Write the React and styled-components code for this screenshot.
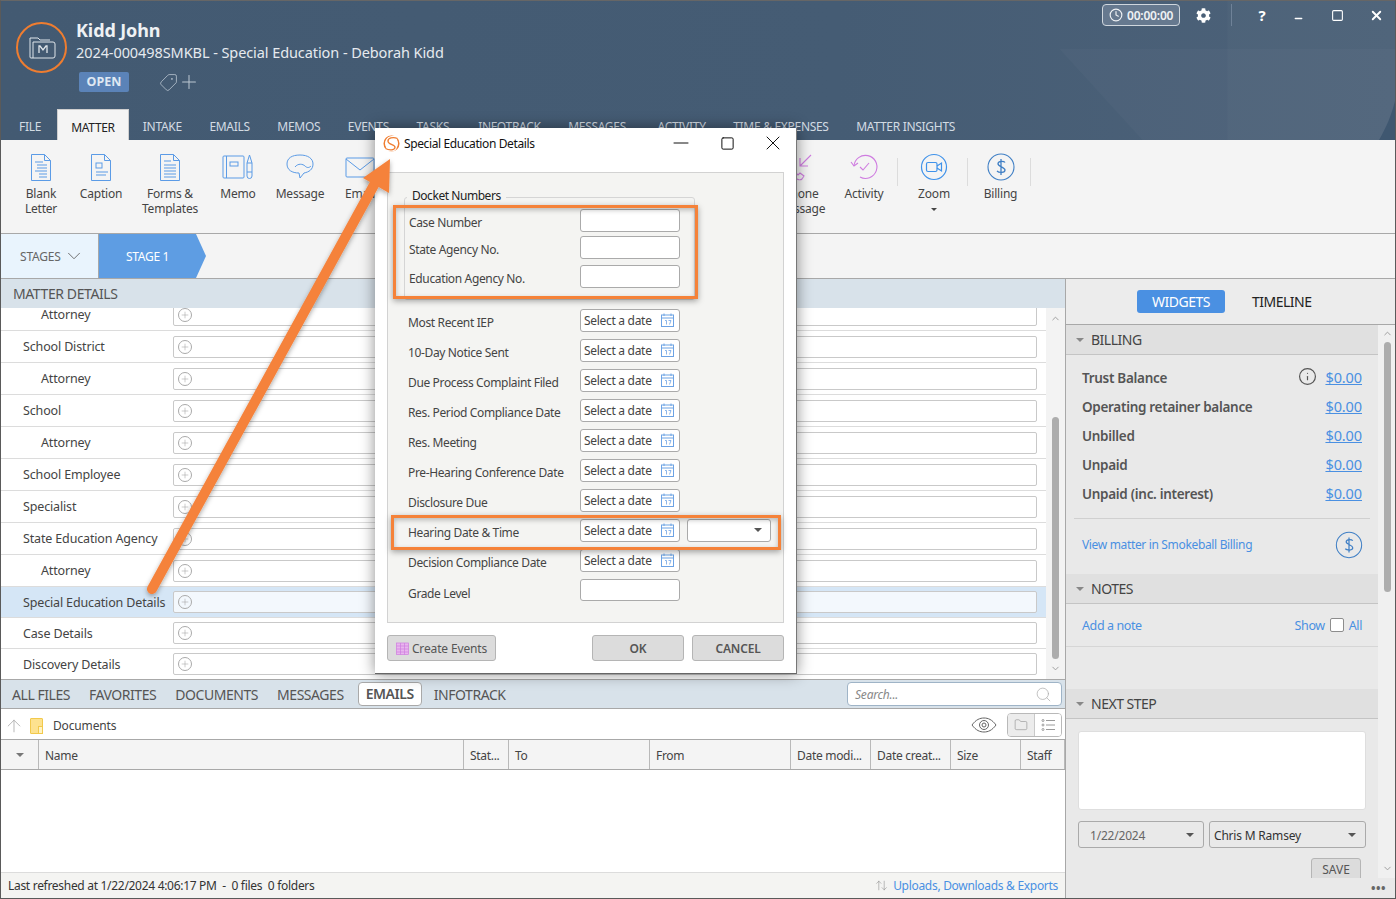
import React from "react";
import styled, { createGlobalStyle } from "styled-components";
import { ChevronDown, ChevronUp, Search, ArrowUp, Folder, Clock, Plus, Tag, Info, X, Minus, Square, ArrowUpDown } from "lucide-react";
import { FaCog } from "react-icons/fa";

const FONT = `"Noto Sans", "Open Sans", "Liberation Sans", sans-serif`;

const GlobalStyle = createGlobalStyle`
  html, body { margin: 0; padding: 0; background: #fff; }
  body { font-family: ${FONT}; font-size: 12px; color: #444; }
  * { box-sizing: border-box; }
`;

const Window = styled.div`
  position: relative;
  width: 1396px;
  height: 899px;
  overflow: hidden;
  display: flex;
  flex-direction: column;
  border: 1px solid #5a5a5a;
  border-top-color: #666;
  background: #fff;
`;

const Header = styled.header`
  position: relative;
  height: 139px;
  flex: none;
  background: linear-gradient(90deg, #435a72 0%, #455c74 60%, #4d6279 100%);
  color: #fff;
  overflow: hidden;
`;
const HeaderDeco = styled.svg`
  position: absolute;
  inset: 0;
  width: 100%;
  height: 100%;
`;
const HeaderTop = styled.div`
  position: relative;
  display: flex;
  justify-content: space-between;
  height: 108px;
  padding: 21px 0 0 15px;
`;
const HeaderLeft = styled.div`
  display: flex;
`;
const MatterBadge = styled.div`
  width: 51px;
  height: 51px;
  border: 2px solid #ef7d30;
  border-radius: 50%;
  display: flex;
  align-items: center;
  justify-content: center;
  flex: none;
`;
const MatterInfo = styled.div`
  margin-left: 9px;
  margin-top: -3px;
`;
const MatterName = styled.div`
  font-size: 18px;
  font-weight: 700;
  line-height: 22px;
  color: #eef1f4;
  letter-spacing: -0.1px;
`;
const MatterTitle = styled.div`
  font-size: 14.5px;
  line-height: 22px;
  color: #e6eaef;
  letter-spacing: -0.08px;
`;
const StatusRow = styled.div`
  display: flex;
  align-items: center;
  margin-top: 8px;
  padding-left: 3px;
  gap: 30px;
`;
const OpenPill = styled.span`
  width: 50px;
  height: 20px;
  background: #5b83b8;
  border-radius: 2px;
  color: #dfe8f2;
  font-size: 12.5px;
  font-weight: 700;
  line-height: 20px;
  text-align: center;
`;
const TagIcons = styled.span`
  display: flex;
  align-items: center;
  color: #bcc7d2;
`;
const WindowControls = styled.div`
  display: flex;
  align-items: flex-start;
  color: #fff;
  padding: 3px 0 0 0;
  margin-top: -21px;
`;
const TimerPill = styled.div`
  display: flex;
  align-items: center;
  gap: 4px;
  width: 78px;
  height: 22px;
  padding-left: 6px;
  border: 1px solid #cfd6dd;
  border-radius: 4px;
  background: #66798f;
  font-size: 12px;
  font-weight: 600;
  color: #eef1f4;
  letter-spacing: -0.2px;
`;
const CtrlSlot = styled.div`
  width: ${(p) => p.$w}px;
  margin-left: ${(p) => p.$ml || 0}px;
  height: 22px;
  display: flex;
  align-items: center;
  justify-content: center;
  font-weight: 700;
  font-size: 15px;
  border-right: ${(p) => (p.$sep ? "1px solid #6f8298" : "none")};
`;
const TabBar = styled.nav`
  position: relative;
  display: flex;
  height: 31px;
  padding-left: 18px;
  font-size: 12px;
`;
const Tab = styled.div`
  height: 31px;
  line-height: 36px;
  padding: 0 ${(p) => (p.$active ? 13 : 0)}px;
  margin-right: ${(p) => (p.$active ? 14 : 27.6 + (p.$extra || 0))}px;
  margin-left: ${(p) => (p.$active ? -11.5 : 0)}px;
  color: ${(p) => (p.$active ? "#222" : "#d3dbe3")};
  background: ${(p) => (p.$active ? "#f4f4f4" : "transparent")};
  border: ${(p) => (p.$active ? "1px solid #cfcfcf" : "none")};
  border-bottom: none;
  letter-spacing: -0.3px;
  white-space: nowrap;
`;

const Ribbon = styled.section`
  display: flex;
  height: 94px;
  flex: none;
  background: #f4f4f4;
  border-bottom: 1px solid #a8a8a8;
  padding-top: 11px;
`;
const RibbonBtn = styled.div`
  flex: none;
  width: ${(p) => p.$w}px;
  margin-left: ${(p) => p.$ml || 0}px;
  padding-left: ${(p) => p.$pl || 0}px;
  display: flex;
  flex-direction: column;
  align-items: center;
  text-align: center;
  font-size: 12px;
  line-height: 15px;
  color: #444;
  letter-spacing: -0.2px;
  span { display: block; white-space: nowrap; }
`;
const RibbonSep = styled.div`
  flex: none;
  width: 1px;
  height: 28px;
  margin-top: 7px;
  background: #dcdcdc;
`;
const RibbonIcon = styled.svg`
  width: 32px;
  height: 32px;
  margin-bottom: 3px;
  flex: none;
`;
const Caret = styled.i`
  display: block;
  width: 0;
  height: 0;
  margin: 7px auto 0;
  border: 3px solid transparent;
  border-top: 3px solid #444;
  border-bottom: none;
`;

const StageBar = styled.div`
  height: 44px;
  flex: none;
  display: flex;
  background: #f4f4f4;
`;
const StagesBtn = styled.div`
  width: 98px;
  background: #e9f4fd;
  border-right: 1px solid #a8a8a8;
  display: flex;
  align-items: center;
  padding-left: 19px;
  gap: 2px;
  color: #666;
  font-size: 12px;
  letter-spacing: -0.2px;
`;
const StageChip = styled.div`
  width: 107px;
  background: #5e9de3;
  clip-path: polygon(0 0, 97px 0, 100% 50%, 97px 100%, 0 100%);
  color: #fff;
  display: flex;
  align-items: center;
  padding-left: 27px;
  font-size: 12px;
  letter-spacing: -0.3px;
`;
const Main = styled.div`
  flex: 1;
  display: flex;
  min-height: 0;
`;
const LeftCol = styled.div`
  width: 1065px;
  flex: none;
  display: flex;
  flex-direction: column;
  border-right: 1px solid #a8a8a8;
`;
const SectionBar = styled.div`
  height: 30px;
  flex: none;
  background: #d8e2ea;
  border-top: 1px solid #a8a8a8;
  display: flex;
  align-items: center;
  padding-left: 12px;
  font-size: 14px;
  color: #555;
  letter-spacing: -0.4px;
`;
const DetailsArea = styled.div`
  position: relative;
  height: 371px;
  flex: none;
  display: flex;
  overflow: hidden;
`;
const RowList = styled.div`
  flex: 1;
  min-width: 0;
`;
const Row = styled.div`
  display: grid;
  grid-template-columns: 172px 864px;
  align-items: center;
  height: ${(p) => p.$h}px;
  border-bottom: 1px solid #dcdcdc;
  background: ${(p) => (p.$sel ? "#d5e6f6" : "transparent")};
  overflow: hidden;
`;
const RowLabel = styled.div`
  padding-left: ${(p) => (p.$sub ? 40 : 22)}px;
  margin-top: ${(p) => p.$mt || 0}px;
  font-size: 12.5px;
  line-height: ${(p) => (p.$mt < 0 ? 13 : 14)}px;
  color: #444;
  white-space: nowrap;
  letter-spacing: -0.15px;
`;
const RowInput = styled.div`
  height: 22px;
  margin-top: ${(p) => (p.$clip ? -9 : 0)}px;
  background: ${(p) => (p.$sel ? "#f3f8fd" : "#fff")};
  border: 1px solid #c9c9c9;
  border-radius: 2px;
  display: flex;
  align-items: center;
  padding-left: 4px;
`;
const PlusDot = styled.span`
  width: 14px;
  height: 14px;
  border: 1px solid #aaa;
  border-radius: 50%;
  display: flex;
  align-items: center;
  justify-content: center;
  color: #999;
`;
const Scroll = styled.div`
  width: 19px;
  flex: none;
  background: #f3f3f3;
  display: flex;
  flex-direction: column;
  align-items: center;
  color: #999;
`;
const ScrollThumb = styled.div`
  width: 7px;
  height: ${(p) => p.$h}px;
  margin-top: ${(p) => p.$mt}px;
  background: #adadad;
  border-radius: 4px;
  flex: none;
`;
const FileTabs = styled.div`
  height: 30px;
  flex: none;
  display: flex;
  align-items: center;
  background: #d8e2ea;
  border-top: 1px solid #a8a8a8;
  border-bottom: 1px solid #a8a8a8;
  padding: 0 3px 0 11px;
  font-size: 14px;
  color: #555;
  letter-spacing: -0.45px;
`;
const FileTab = styled.span`
  margin-right: ${(p) => (p.$active ? 12 : 19)}px;
  margin-left: ${(p) => (p.$active ? -5 : 0)}px;
  ${(p) =>
    p.$active &&
    `height: 24px;
     line-height: 22px;
     padding: 0 7px;
     background: #fff;
     border: 1px solid #a9a9a9;
     border-radius: 4px;
     font-weight: 600;`}
`;
const SearchBox = styled.div`
  margin-left: auto;
  width: 215px;
  height: 24px;
  background: #fff;
  border: 1px solid #9fb4c7;
  border-radius: 4px;
  padding: 0 9px 0 7px;
  display: flex;
  align-items: center;
  justify-content: space-between;
  font-style: italic;
  font-size: 12px;
  color: #888;
  letter-spacing: -0.2px;
`;
const PathRow = styled.div`
  height: 31px;
  flex: none;
  display: flex;
  align-items: center;
  padding: 3px 3px 0 3px;
  font-size: 12px;
  color: #444;
  letter-spacing: -0.15px;
  border-bottom: 1px solid #a8a8a8;
`;
const FolderTab = styled.span`
  position: relative;
  width: 13px;
  height: 16px;
  margin: 0 10px 0 6px;
  background: #fde28f;
  border: 1px solid #f2c94c;
  border-radius: 1px;
  &::after {
    content: "";
    position: absolute;
    right: -1px;
    bottom: -1px;
    width: 3px;
    height: 6px;
    border: 1px solid #f2c94c;
    background: #fff3c4;
  }
`;
const EyeIcon = styled.svg`
  margin-left: auto;
  margin-top: -2px;
  flex: none;
`;
const ViewToggle = styled.div`
  display: flex;
  width: 55px;
  height: 24px;
  margin-top: -2px;
  margin-left: 10px;
  border: 1px solid #b9b9b9;
  border-radius: 4px;
  overflow: hidden;
`;
const ViewBtn = styled.span`
  flex: 1;
  display: flex;
  align-items: center;
  justify-content: center;
  background: ${(p) => (p.$on ? "#ececec" : "#fff")};
  border-right: ${(p) => (p.$on ? "1px solid #c9c9c9" : "none")};
  color: #8b8b8b;
`;
const TableHead = styled.div`
  height: 30px;
  flex: none;
  display: grid;
  grid-template-columns: 38px 425px 45px 141px 141px 80px 80px 70px 44px;
  background: #f4f4f4;
  border-bottom: 1px solid #a8a8a8;
  font-size: 12px;
  color: #444;
  letter-spacing: -0.3px;
`;
const HeadCell = styled.div`
  display: flex;
  align-items: center;
  justify-content: ${(p) => (p.$center ? "center" : "flex-start")};
  padding: 1px ${(p) => (p.$center ? 0 : 6)}px 0;
  border-right: 1px solid #b9b9b9;
  white-space: nowrap;
  overflow: hidden;
`;
const DownTri = styled.i`
  width: 0;
  height: 0;
  border: ${(p) => p.$s || 4}px solid transparent;
  border-top: ${(p) => p.$s || 4}px solid ${(p) => p.$c || "#777"};
  border-bottom: none;
  flex: none;
`;
const TableBody = styled.div`
  flex: 1;
  background: #fff;
`;
const StatusBar = styled.footer`
  height: 26px;
  flex: none;
  display: flex;
  align-items: center;
  justify-content: space-between;
  padding: 0 7px;
  background: #f4f4f2;
  border-top: 1px solid #dcdcdc;
  font-size: 12px;
  color: #333;
  letter-spacing: -0.3px;
  white-space: pre;
`;
const UploadLink = styled.span`
  display: flex;
  align-items: center;
  gap: 5px;
  color: #4a90e2;
`;

const RightCol = styled.aside`
  flex: 1;
  min-width: 0;
  display: flex;
  flex-direction: column;
  background: #e9e9e9;
`;
const WidgetTabs = styled.div`
  height: 47px;
  flex: none;
  display: flex;
  align-items: center;
  padding-left: 71px;
  border-top: 1px solid #a8a8a8;
  border-bottom: 1px solid #a8a8a8;
  background: #ececec;
  font-size: 14px;
  letter-spacing: -0.5px;
`;
const WidgetTab = styled.span`
  width: 88px;
  height: 23px;
  margin-right: 27px;
  line-height: 23px;
  text-align: ${(p) => (p.$on ? "center" : "left")};
  border-radius: 3px;
  color: ${(p) => (p.$on ? "#fff" : "#222")};
  background: ${(p) => (p.$on ? "#4a90e2" : "transparent")};
`;
const SideBody = styled.div`
  flex: 1;
  min-height: 0;
  display: flex;
`;
const SideContent = styled.div`
  width: 312px;
  flex: none;
  overflow: hidden;
`;
const WidgetHead = styled.div`
  height: 30px;
  display: flex;
  align-items: center;
  gap: 7px;
  padding-left: 10px;
  background: #e0e0e0;
  border-bottom: 1px solid #c4c4c4;
  font-size: 14px;
  color: #444;
  letter-spacing: -0.5px;
`;
const BalanceList = styled.div`
  padding: 8px 16px 10px;
`;
const BalanceRow = styled.div`
  height: 29px;
  display: flex;
  align-items: center;
  justify-content: space-between;
  font-size: 13.5px;
  font-weight: 600;
  color: #555;
  letter-spacing: -0.3px;
`;
const Amount = styled.span`
  display: flex;
  align-items: center;
  gap: 8px;
  margin-top: -2px;
  color: #4a90e2;
  font-size: 14.5px;
  font-weight: 400;
  text-decoration: underline;
  letter-spacing: -0.1px;
`;
const BillingFoot = styled.div`
  height: 56px;
  margin: 0 8px;
  padding: 0 6px 4px 8px;
  border-top: 1px solid #d0d0d0;
  display: flex;
  align-items: center;
  justify-content: space-between;
  color: #4a90e2;
  font-size: 12px;
  letter-spacing: -0.34px;
`;
const NotesRow = styled.div`
  height: 43px;
  padding: 0 16px;
  border-bottom: 1px solid #d6d6d6;
  display: flex;
  align-items: center;
  justify-content: space-between;
  color: #4a90e2;
  font-size: 12.5px;
  letter-spacing: -0.4px;
`;
const ShowAll = styled.span`
  display: flex;
  align-items: center;
  gap: 5px;
`;
const Check = styled.i`
  width: 14px;
  height: 14px;
  background: #fff;
  border: 1px solid #8d8d8d;
  border-radius: 2px;
`;
const NotesGap = styled.div`
  height: 42px;
`;
const NextStep = styled.div`
  padding: 12px 12px 0;
  display: flex;
  flex-direction: column;
  height: 180px;
`;
const NextText = styled.div`
  height: 79px;
  background: #fff;
  border: 1px solid #dedede;
  border-radius: 3px;
`;
const SelectRow = styled.div`
  display: flex;
  gap: 5px;
  margin-top: 11px;
`;
const SideSelect = styled.div`
  width: ${(p) => p.$w}px;
  height: 27px;
  border: 1px solid #aaa;
  border-radius: 3px;
  display: flex;
  align-items: center;
  justify-content: space-between;
  padding: 1px 9px 0 ${(p) => p.$pl}px;
  font-size: 12px;
  color: ${(p) => p.$c};
  letter-spacing: -0.2px;
`;
const SaveBtn = styled.div`
  align-self: flex-end;
  width: 50px;
  height: 26px;
  margin: 10px 5px 0 0;
  background: #dcdcdc;
  border: 1px solid #b5b5b5;
  border-radius: 3px;
  text-align: center;
  line-height: 22px;
  font-size: 12px;
  color: #555;
`;
const SideScroll = styled(Scroll)`
  width: 18px;
  background: #f0f0f0;
`;
const DotsStrip = styled.div`
  height: 20px;
  flex: none;
  display: flex;
  align-items: center;
  justify-content: flex-end;
  padding-right: 9px;
  font-size: 12px;
  font-weight: 700;
  color: #666;
  letter-spacing: 0.5px;
`;

const Dialog = styled.div`
  position: absolute;
  left: 374px;
  top: 127px;
  width: 422px;
  height: 546px;
  background: #fff;
  box-shadow: 0 0 14px rgba(0, 0, 0, 0.45);
  border-bottom: 1px solid #666;
  border-right: 1px solid #777;
  display: flex;
  flex-direction: column;
  padding: 0 12px;
`;
const DialogTitle = styled.div`
  height: 32px;
  flex: none;
  display: flex;
  align-items: center;
  margin: 0 -12px 0 -4px;
  padding-bottom: 2px;
  font-size: 12px;
  color: #111;
  letter-spacing: -0.39px;
`;
const DialogTitleText = styled.span`
  margin-left: 4px;
  flex: 1;
`;
const TitleBtn = styled.span`
  flex: none;
  width: 46px;
  height: 30px;
  display: flex;
  align-items: center;
  justify-content: center;
  color: #111;
`;
const DialogPanel = styled.div`
  flex: none;
  margin-top: 12px;
  height: 451px;
  background: #f4f4f2;
  border: 1px solid #d2d2d2;
  padding-top: 24px;
`;
const Fieldset = styled.div`
  position: relative;
  width: 291px;
  height: 103px;
  margin: 0 0 7px 16px;
  border: 1px solid #d5d5d5;
  border-radius: 3px;
  padding: 9px 0 0 4px;
`;
const Legend = styled.div`
  position: absolute;
  left: 2px;
  top: -10px;
  padding: 0 5px;
  background: #f4f4f2;
  color: #222;
  font-size: 12px;
  line-height: 16px;
  letter-spacing: -0.45px;
`;
const FormRow = styled.div`
  display: flex;
  align-items: center;
  height: ${(p) => p.$h || 30}px;
  padding-left: ${(p) => p.$pl || 0}px;
`;
const FormLabel = styled.div`
  width: ${(p) => p.$w || 172}px;
  flex: none;
  font-size: 12px;
  color: #444;
  letter-spacing: -0.36px;
  white-space: nowrap;
  margin-top: ${(p) => p.$mt || 0}px;
`;
const FormInput = styled.div`
  width: 100px;
  height: ${(p) => p.$h || 23}px;
  margin-top: ${(p) => p.$mt || 0}px;
  background: #fff;
  border: 1px solid #aaa;
  border-radius: 3px;
  flex: none;
`;
const DateInput = styled(FormInput)`
  display: flex;
  align-items: center;
  justify-content: space-between;
  padding: 0 4px 0 3px;
  font-size: 12px;
  color: #444;
  letter-spacing: -0.3px;
  margin-top: -4px;
`;
const TimeSelect = styled(FormInput)`
  width: 84px;
  margin-left: 7px;
  margin-top: -4px;
  display: flex;
  align-items: center;
  justify-content: flex-end;
  padding-right: 8px;
`;
const DialogActions = styled.div`
  display: flex;
  align-items: center;
  margin-top: 12px;
`;
const DlgBtn = styled.div`
  width: ${(p) => p.$w}px;
  height: 26px;
  margin-left: ${(p) => p.$ml || 0}px;
  background: #dcdcdc;
  border: 1px solid #b5b5b5;
  border-radius: 3px;
  display: flex;
  align-items: center;
  justify-content: center;
  gap: 3px;
  font-size: 12px;
  font-weight: ${(p) => (p.$bold ? 600 : 400)};
  color: #555;
  letter-spacing: -0.15px;
`;
const Callout = styled.div`
  position: absolute;
  left: ${(p) => p.$x}px;
  top: ${(p) => p.$y}px;
  width: ${(p) => p.$w}px;
  height: ${(p) => p.$h}px;
  border: 3px solid #f58239;
  box-shadow: 0 2px 6px rgba(0, 0, 0, 0.35), inset 0 2px 5px rgba(0, 0, 0, 0.25);
  pointer-events: none;
`;
const ArrowLayer = styled.svg`
  position: absolute;
  left: 0;
  top: 0;
  width: 1396px;
  height: 899px;
  pointer-events: none;
`;

const blue = "#5b9be6";
const lilac = "#cf7ce0";

const DocIcon = ({ kind }) => (
  <RibbonIcon viewBox="0 0 32 32" fill="none" stroke={blue} strokeWidth="1">
    <path d="M6.5 3.5h13l6 6v20h-19z" />
    <path d="M19.5 3.5v6h6" />
    {kind === "letter" && <path d="M10 11h8M12 14h10M12 17h10M10 20h12M14 23h8M14 26h8" />}
    {kind === "caption" && (
      <>
        <rect x="11" y="12" width="6" height="5" />
        <path d="M11 21h12M11 24h10" />
      </>
    )}
    {kind === "forms" && <path d="M10 10h7M10 14h12M10 17h12M10 20h12M10 23h12M10 26h12" />}
  </RibbonIcon>
);
const MemoIcon = () => (
  <RibbonIcon viewBox="0 0 32 32" fill="none" stroke={blue} strokeWidth="1">
    <rect x="1" y="5" width="21" height="22" rx="1" />
    <path d="M4.5 5v22" />
    <rect x="8" y="11" width="8" height="4" />
    <path d="M25 12v13a2.5 2.5 0 0 0 5 0V12zM25 12l2.500-8 2.500 8M25 21h5" />
  </RibbonIcon>
);
const MessageIcon = () => (
  <RibbonIcon viewBox="0 0 32 32" fill="none" stroke={blue} strokeWidth="1">
    <path d="M16 4c8 0 13 3.500 13 9s-4 8-9 9l-4 5-1-5C8 22 3 19 3 13S8 4 16 4z" />
    <path d="M11 16c3-4 8-3 10-1s4 2 6 0" />
  </RibbonIcon>
);
const MailIcon = () => (
  <RibbonIcon viewBox="0 0 32 32" fill="none" stroke={blue} strokeWidth="1">
    <rect x="2" y="7" width="28" height="19" rx="1" />
    <path d="M2 8l14 11L30 8" />
  </RibbonIcon>
);
const PhoneMsgIcon = () => (
  <RibbonIcon viewBox="0 0 32 32" fill="none" stroke={lilac} strokeWidth="1.100">
    <path d="M26 4L15 15M15 7v8h8" />
    <path d="M5 16c-2 2 0 6 3 9s7 5 9 3l2-3-4-3-2 2-4-4 2-2-3-4z" />
  </RibbonIcon>
);
const ActivityIcon = () => (
  <RibbonIcon viewBox="0 0 32 32" fill="none" stroke={lilac} strokeWidth="1.100">
    <path d="M6 15A11.500 11.500 0 1 1 12 26" />
    <path d="M3 11l3 4 4-3" />
    <path d="M12 16l3 3 6-7" />
  </RibbonIcon>
);
const ZoomIcon = () => (
  <RibbonIcon viewBox="0 0 32 32" fill="none" stroke="#3f92ea" strokeWidth="1.200">
    <circle cx="16" cy="16" r="12.500" />
    <rect x="8.500" y="11.500" width="10.500" height="9" rx="1.500" />
    <path d="M19 15l4.500-3v8L19 17" />
  </RibbonIcon>
);
const BillingIcon = () => (
  <RibbonIcon viewBox="0 0 32 32" fill="none" stroke="#3f7fc5" strokeWidth="1.100">
    <circle cx="16" cy="16" r="13" />
    <path d="M20 11.500c-1-1.500-6.500-2-7 1s7 3.500 7 6.500-6 3-8 1M16 8v16" strokeWidth="1.300" />
  </RibbonIcon>
);
const DollarCircle = () => (
  <svg width="30" height="30" viewBox="0 0 32 32" fill="none" stroke="#3f7fc5" strokeWidth="1.100">
    <circle cx="16" cy="16" r="13.500" />
    <path d="M20 11.500c-1-1.500-6.500-2-7 1s7 3.500 7 6.500-6 3-8 1M16 8v16" strokeWidth="1.300" />
  </svg>
);
const CalIcon = () => (
  <svg width="15" height="16" viewBox="0 0 15 16" fill="none" stroke="#6da3e4" strokeWidth="1">
    <rect x="1.500" y="3" width="12" height="11.500" />
    <path d="M1.500 6h12M4 1.500v2.500M11 1.500v2.500" />
    <path d="M5 8.500h1.500v4M8.500 8.500h2.500l-1.500 4" strokeWidth="0.800" />
  </svg>
);
const MatterFolder = () => (
  <svg width="28" height="26" viewBox="0 0 28 26" fill="none" stroke="#dfe5ea" strokeWidth="1">
    <path d="M2 3h8l2 2h10" />
    <path d="M2 3v19a1 1 0 0 0 1 1h2" />
    <path d="M5 23V7h20a2 2 0 0 1 2 2v12a2 2 0 0 1-2 2z" />
    <path d="M11 18v-7h1l3 4 3-4h1v7" strokeWidth="1.300" />
  </svg>
);
const SmokeballLogo = () => (
  <svg width="17" height="17" viewBox="0 0 17 17" fill="none">
    <circle cx="8.500" cy="8.500" r="7.300" stroke="#ef7d30" strokeWidth="1.500" />
    <path d="M14.500 3.500C10 1.500 4.500 3 5 6.500S12.500 9.500 12 12.500 6 15.500 2.500 13.500" stroke="#fff" strokeWidth="3.400" />
    <path d="M14.500 3.500C10 1.500 4.500 3 5 6.500S12.500 9.500 12 12.500 6 15.500 2.500 13.500" stroke="#ef7d30" strokeWidth="1.300" />
  </svg>
);
const ListViewIcon = () => (
  <svg width="14" height="14" viewBox="0 0 14 14" fill="none" stroke="#9a9a9a" strokeWidth="1">
    <path d="M5 2.500h9M5 7h9M5 11.500h9" />
    <circle cx="2" cy="2.500" r="1" />
    <circle cx="2" cy="7" r="1" />
    <circle cx="2" cy="11.500" r="1" />
  </svg>
);
const CalPurple = () => (
  <svg width="13" height="13" viewBox="0 0 13 13" fill="#e9b6ee" stroke="#cf7ce0" strokeWidth="0.700">
    <rect x="0.500" y="1" width="12" height="11.500" />
    <path d="M0.500 4h12M0.500 7h12M0.500 10h12M4.500 1v11.500M8.500 1v11.500" />
  </svg>
);

const tabs = [
  { t: "INTAKE" },
  { t: "EMAILS" },
  { t: "MEMOS" },
  { t: "EVENTS" },
  { t: "TASKS", extra: 1.5 },
  { t: "INFOTRACK" },
  { t: "MESSAGES", extra: 4 },
  { t: "ACTIVITY" },
  { t: "TIME & EXPENSES" },
  { t: "MATTER INSIGHTS" },
];
const rows = [
  { label: "Attorney", sub: true, h: 23, clip: true },
  { label: "School District", h: 32 },
  { label: "Attorney", sub: true, h: 32 },
  { label: "School", h: 32 },
  { label: "Attorney", sub: true, h: 32 },
  { label: "School Employee", h: 32 },
  { label: "Specialist", h: 32 },
  { label: "State Education Agency", h: 32 },
  { label: "Attorney", sub: true, h: 32 },
  { label: "Special Education Details", h: 31, sel: true, low: true },
  { label: "Case Details", h: 31, low: true },
  { label: "Discovery Details", h: 31, low: true },
];
const balances = ["Trust Balance", "Operating retainer balance", "Unbilled", "Unpaid", "Unpaid (inc. interest)"];
const dates = ["Most Recent IEP", "10-Day Notice Sent", "Due Process Complaint Filed", "Res. Period Compliance Date", "Res. Meeting", "Pre-Hearing Conference Date", "Disclosure Due"];

export default function App() {
  return (
    <>
      <GlobalStyle />
      <Window>
        <Header>
          <HeaderDeco viewBox="0 0 1396 139" preserveAspectRatio="none">
            <path d="M1060 48H1396V139H1143z" fill="#ffffff" opacity="0.025" />
            <path d="M1228 0h168v139h-168z" fill="#ffffff" opacity="0.02" />
            <path d="M1380 139C1388 125 1392 115 1396 100V139z" fill="#3f5770" />
          </HeaderDeco>
          <HeaderTop>
            <HeaderLeft>
              <MatterBadge><MatterFolder /></MatterBadge>
              <MatterInfo>
                <MatterName>Kidd John</MatterName>
                <MatterTitle>2024-000498SMKBL - Special Education - Deborah Kidd</MatterTitle>
                <StatusRow>
                  <OpenPill>OPEN</OpenPill>
                  <TagIcons>
                    <Tag size={19} strokeWidth={1} style={{ transform: "scaleX(-1)" }} />
                    <Plus size={22} strokeWidth={1.1} />
                  </TagIcons>
                </StatusRow>
              </MatterInfo>
            </HeaderLeft>
            <WindowControls>
              <TimerPill><Clock size={14} />00:00:00</TimerPill>
              <CtrlSlot $w={46}><FaCog size={15} /></CtrlSlot>
              <CtrlSlot $w={6} $sep />
              <CtrlSlot $w={36} $ml={12}>?</CtrlSlot>
              <CtrlSlot $w={37}><Minus size={11} strokeWidth={3} style={{ marginTop: 7 }} /></CtrlSlot>
              <CtrlSlot $w={40}><Square size={13} strokeWidth={2} /></CtrlSlot>
              <CtrlSlot $w={38}><X size={15} strokeWidth={3} /></CtrlSlot>
            </WindowControls>
          </HeaderTop>
          <TabBar>
            <Tab>FILE</Tab>
            <Tab $active>MATTER</Tab>
            {tabs.map((x) => <Tab key={x.t} $extra={x.extra}>{x.t}</Tab>)}
          </TabBar>
        </Header>

        <Ribbon>
          <RibbonBtn $w={60} $ml={10}><DocIcon kind="letter" /><span>Blank</span><span>Letter</span></RibbonBtn>
          <RibbonBtn $w={60}><DocIcon kind="caption" /><span>Caption</span></RibbonBtn>
          <RibbonBtn $w={78}><DocIcon kind="forms" /><span>Forms &amp;</span><span>Templates</span></RibbonBtn>
          <RibbonBtn $w={58}><MemoIcon /><span>Memo</span></RibbonBtn>
          <RibbonBtn $w={66}><MessageIcon /><span>Message</span></RibbonBtn>
          <RibbonBtn $w={54}><MailIcon /><span>Email</span></RibbonBtn>
          <RibbonBtn $w={60} $ml={384}><PhoneMsgIcon /><span>Phone</span><span>Message</span></RibbonBtn>
          <RibbonBtn $w={66}><ActivityIcon /><span>Activity</span></RibbonBtn>
          <RibbonSep />
          <RibbonBtn $w={69} $pl={3}><ZoomIcon /><span>Zoom</span><Caret /></RibbonBtn>
          <RibbonSep />
          <RibbonBtn $w={62} $pl={3}><BillingIcon /><span>Billing</span></RibbonBtn>
          <RibbonSep />
        </Ribbon>

        <StageBar>
          <StagesBtn>STAGES<ChevronDown size={22} strokeWidth={1} /></StagesBtn>
          <StageChip>STAGE 1</StageChip>
        </StageBar>

        <Main>
          <LeftCol>
            <SectionBar>MATTER DETAILS</SectionBar>
            <DetailsArea>
              <RowList>
                {rows.map((r, i) => (
                  <Row key={i} $h={r.h} $sel={r.sel}>
                    <RowLabel $sub={r.sub} $mt={r.clip ? -9 : r.low ? 2 : 0}>{r.label}</RowLabel>
                    <RowInput $clip={r.clip} $sel={r.sel}>
                      <PlusDot><Plus size={10} strokeWidth={1.2} /></PlusDot>
                    </RowInput>
                  </Row>
                ))}
              </RowList>
              <Scroll>
                <ChevronUp size={11} style={{ marginTop: 5 }} />
                <ScrollThumb $h={242} $mt={93} />
                <ChevronDown size={11} style={{ marginTop: 4 }} />
              </Scroll>
            </DetailsArea>
            <FileTabs>
              <FileTab>ALL FILES</FileTab>
              <FileTab>FAVORITES</FileTab>
              <FileTab>DOCUMENTS</FileTab>
              <FileTab>MESSAGES</FileTab>
              <FileTab $active>EMAILS</FileTab>
              <FileTab>INFOTRACK</FileTab>
              <SearchBox>Search...<Search size={17} strokeWidth={1} color="#aaa" /></SearchBox>
            </FileTabs>
            <PathRow>
              <ArrowUp size={20} strokeWidth={1} color="#aaa" />
              <FolderTab />
              Documents
              <EyeIcon width="26" height="16" viewBox="0 0 26 16" fill="none" stroke="#666" strokeWidth="1">
                <path d="M1 8C5 2.500 9 1 13 1s8 1.500 12 7c-4 5.500-8 7-12 7S5 13.500 1 8z" />
                <circle cx="13" cy="8" r="4.500" />
                <circle cx="13" cy="8" r="2" />
              </EyeIcon>
              <ViewToggle>
                <ViewBtn $on><Folder size={14} strokeWidth={1} /></ViewBtn>
                <ViewBtn><ListViewIcon /></ViewBtn>
              </ViewToggle>
            </PathRow>
            <TableHead>
              <HeadCell $center><DownTri /></HeadCell>
              <HeadCell>Name</HeadCell>
              <HeadCell>Stat...</HeadCell>
              <HeadCell>To</HeadCell>
              <HeadCell>From</HeadCell>
              <HeadCell>Date modi...</HeadCell>
              <HeadCell>Date creat...</HeadCell>
              <HeadCell>Size</HeadCell>
              <HeadCell>Staff</HeadCell>
            </TableHead>
            <TableBody />
            <StatusBar>
              <span>Last refreshed at 1/22/2024 4:06:17 PM  -  0 files  0 folders</span>
              <UploadLink><ArrowUpDown size={13} strokeWidth={1} color="#888" />Uploads, Downloads &amp; Exports</UploadLink>
            </StatusBar>
          </LeftCol>

          <RightCol>
            <WidgetTabs>
              <WidgetTab $on>WIDGETS</WidgetTab>
              <WidgetTab>TIMELINE</WidgetTab>
            </WidgetTabs>
            <SideBody>
              <SideContent>
                <WidgetHead><DownTri $c="#888" />BILLING</WidgetHead>
                <BalanceList>
                  {balances.map((b, i) => (
                    <BalanceRow key={b}>
                      {b}
                      <Amount>
                        {i === 0 && <Info size={19} color="#555" strokeWidth={1.5} />}
                        $0.00
                      </Amount>
                    </BalanceRow>
                  ))}
                </BalanceList>
                <BillingFoot>View matter in Smokeball Billing<DollarCircle /></BillingFoot>
                <WidgetHead><DownTri $c="#888" />NOTES</WidgetHead>
                <NotesRow>
                  Add a note
                  <ShowAll>Show<Check />All</ShowAll>
                </NotesRow>
                <NotesGap />
                <WidgetHead><DownTri $c="#888" />NEXT STEP</WidgetHead>
                <NextStep>
                  <NextText />
                  <SelectRow>
                    <SideSelect $w={126} $pl={11} $c="#666">1/22/2024<DownTri $c="#555" /></SideSelect>
                    <SideSelect $w={157} $pl={4} $c="#333">Chris M Ramsey<DownTri $c="#555" /></SideSelect>
                  </SelectRow>
                  <SaveBtn>SAVE</SaveBtn>
                </NextStep>
              </SideContent>
              <SideScroll>
                <ChevronUp size={11} style={{ marginTop: 3 }} />
                <ScrollThumb $h={250} $mt={3} />
                <ChevronDown size={11} style={{ marginTop: "auto", marginBottom: 4 }} />
              </SideScroll>
            </SideBody>
            <DotsStrip>•••</DotsStrip>
          </RightCol>
        </Main>

        <Dialog>
          <DialogTitle>
            <SmokeballLogo />
            <DialogTitleText>Special Education Details</DialogTitleText>
            <TitleBtn><Minus size={24} strokeWidth={1} /></TitleBtn>
            <TitleBtn><Square size={15} strokeWidth={1.6} /></TitleBtn>
            <TitleBtn><X size={24} strokeWidth={1} /></TitleBtn>
          </DialogTitle>
          <DialogPanel>
            <Fieldset>
              <Legend>Docket Numbers</Legend>
              <FormRow $h={27}><FormLabel $w={171} $mt={3}>Case Number</FormLabel><FormInput /></FormRow>
              <FormRow $h={27}><FormLabel $w={171} $mt={3}>State Agency No.</FormLabel><FormInput /></FormRow>
              <FormRow $h={31}><FormLabel $w={171} $mt={3}>Education Agency No.</FormLabel><FormInput /></FormRow>
            </Fieldset>
            {dates.map((d) => (
              <FormRow key={d} $pl={20}>
                <FormLabel>{d}</FormLabel><DateInput>Select a date<CalIcon /></DateInput>
              </FormRow>
            ))}
            <FormRow $pl={20}>
              <FormLabel>Hearing Date &amp; Time</FormLabel>
              <DateInput>Select a date<CalIcon /></DateInput>
              <TimeSelect><DownTri $c="#555" /></TimeSelect>
            </FormRow>
            <FormRow $pl={20}>
              <FormLabel>Decision Compliance Date</FormLabel><DateInput>Select a date<CalIcon /></DateInput>
            </FormRow>
            <FormRow $pl={20}>
              <FormLabel $mt={2}>Grade Level</FormLabel><FormInput $h={22} $mt={-4} />
            </FormRow>
          </DialogPanel>
          <DialogActions>
            <DlgBtn $w={109}><CalPurple />Create Events</DlgBtn>
            <DlgBtn $w={92} $ml={96} $bold>OK</DlgBtn>
            <DlgBtn $w={92} $ml={8} $bold>CANCEL</DlgBtn>
          </DialogActions>
        </Dialog>

        <Callout $x={392} $y={204} $w={305} $h={94} />
        <Callout $x={390} $y={514} $w={390} $h={35} />

        <ArrowLayer viewBox="0 0 1396 899">
          <defs>
            <filter id="arrowShadow" x="-20%" y="-20%" width="140%" height="140%">
              <feDropShadow dx="0" dy="2" stdDeviation="2.500" floodColor="#000" floodOpacity="0.35" />
            </filter>
          </defs>
          <g filter="url(#arrowShadow)">
            <path d="M373 184L151 588" stroke="#f5823b" strokeWidth="10" strokeLinecap="round" fill="none" />
            <path d="M389 158L388 192L362 177z" fill="#f5823b" />
          </g>
        </ArrowLayer>
      </Window>
    </>
  );
}
